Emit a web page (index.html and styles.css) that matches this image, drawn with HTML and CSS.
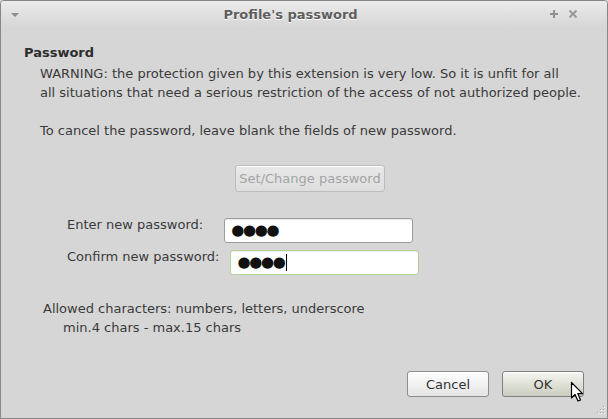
FILE: index.html
```html
<!DOCTYPE html>
<html>
<head>
<meta charset="utf-8">
<link rel="stylesheet" href="styles.css">
</head>
<body>
<div class="window">
  <div class="titlebar">
    <svg class="menu-btn" width="10" height="6" viewBox="0 0 10 6"><path d="M1 1 H9 L5 5 Z" fill="#8c8c8c"/></svg>
    <div class="title">Profile's password</div>
    <div class="tb-buttons">
      <svg width="10" height="10" viewBox="0 0 10 10"><path d="M5 1 V9 M1 5 H9" stroke="#8f8f8f" stroke-width="2"/></svg>
      <svg width="10" height="10" viewBox="0 0 10 10"><path d="M1.5 1.5 L8.5 8.5 M8.5 1.5 L1.5 8.5" stroke="#9a9a9a" stroke-width="2"/></svg>
    </div>
  </div>
  <div class="content">
    <div class="heading">Password</div>
    <div class="desc">
      <p>WARNING: the protection given by this extension is very low. So it is unfit for all<br>all situations that need a serious restriction of the access of not authorized people.</p>
      <p class="gap">To cancel the password, leave blank the fields of new password.</p>
    </div>
    <div class="set-row">
      <button class="btn disabled" disabled>Set/Change password</button>
    </div>
    <div class="fields">
      <div class="field-row">
        <span class="label">Enter new password:</span>
        <div class="entry entry-a"><span class="dots">●●●●</span></div>
      </div>
      <div class="field-row">
        <span class="label">Confirm new password:</span>
        <div class="entry entry-b focus"><span class="dots">●●●●</span><span class="caret"></span></div>
      </div>
    </div>
    <div class="allowed">
      <div>Allowed characters: numbers, letters, underscore</div>
      <div class="minmax">min.4 chars - max.15 chars</div>
    </div>
    <div class="actions">
      <button class="btn">Cancel</button>
      <button class="btn hover">OK</button>
    </div>
  </div>
  <svg class="pointer" width="16" height="22" viewBox="0 0 16 22"><path d="M1.5 1.5 V17 L5 13.5 L8 20 L10.5 19 L7.8 12.6 L12.5 12.6 Z" fill="#fff" stroke="#000" stroke-width="1.2" stroke-linejoin="round"/></svg>
  <svg class="grip" width="10" height="10" viewBox="0 0 10 10">
    <g fill="#a8a8a8">
      <rect x="8" y="0" width="1" height="1"/>
      <rect x="5" y="3" width="1" height="1"/><rect x="8" y="3" width="1" height="1"/>
      <rect x="2" y="6" width="1" height="1"/><rect x="5" y="6" width="1" height="1"/><rect x="8" y="6" width="1" height="1"/>
    </g>
    <g fill="#fff">
      <rect x="9" y="1" width="1" height="1"/>
      <rect x="6" y="4" width="1" height="1"/><rect x="9" y="4" width="1" height="1"/>
      <rect x="3" y="7" width="1" height="1"/><rect x="6" y="7" width="1" height="1"/><rect x="9" y="7" width="1" height="1"/>
    </g>
  </svg>
</div>
</body>
</html>
```
FILE: styles.css
```css
* { box-sizing: border-box; }
html, body { margin: 0; padding: 0; }
body {
  width: 608px;
  height: 419px;
  background: #d6d6d6;
  font-family: "DejaVu Sans", sans-serif;
  font-size: 13px;
  color: #3a3a3a;
  overflow: hidden;
}
.window {
  position: relative;
  width: 608px;
  height: 419px;
  border: 1px solid #868686;
  border-radius: 4px 4px 0 0;
  background: #d6d6d6;
  display: flex;
  flex-direction: column;
}
.titlebar {
  height: 26px;
  flex: none;
  display: flex;
  align-items: center;
  padding: 0 10px 0 8px;
  background: linear-gradient(#ebebeb, #d6d6d6);
  border-radius: 3px 3px 0 0;
}
.menu-btn { flex: none; margin-left: 1px; margin-top: 1px; }
.title {
  flex: 1;
  text-align: center;
  font-weight: bold;
  color: #5e5e5e;
  text-shadow: 0 1px 0 #fff;
  padding-left: 12px;
}
.tb-buttons { display: flex; gap: 9px; align-items: center; margin-right: 19px; }
.content {
  flex: 1;
  display: flex;
  flex-direction: column;
  padding: 16px 0 0 23px;
  line-height: 19px;
}
.heading { font-weight: bold; color: #2e2e2e; }
.desc { padding-left: 16px; margin-top: 2px; }
.desc p { margin: 0; }
.desc p.gap { margin-top: 19px; }
.set-row {
  display: flex;
  margin-top: 25px;
  padding-left: 211px;
}
.btn {
  font-family: "DejaVu Sans", sans-serif;
  font-size: 13px;
  color: #333;
  height: 26px;
  padding: 0 5px;
  white-space: nowrap;
  border: 1px solid #8e8e8e;
  border-radius: 3px;
  background: linear-gradient(#ffffff, #e4e4e4);
  box-shadow: inset 0 1px 0 #fff;
}
.btn.disabled {
  width: 150px;
  height: 27px;
  padding: 0;
  color: #a3a3a3;
  border-color: #bcbcbc;
  background: linear-gradient(#e8e8e8, #dedede);
}
.fields {
  display: flex;
  flex-direction: column;
  gap: 7px;
  margin-top: 26px;
  padding-left: 43px;
}
.field-row { display: flex; align-items: center; }
.label { margin-top: -13px; }
.entry {
  height: 25px;
  width: 189px;
  background: #fff;
  border: 1px solid #9c9c9c;
  border-radius: 3px;
  box-shadow: inset 0 1px 1px rgba(0,0,0,0.08);
  display: flex;
  align-items: center;
  padding-left: 6px;
}
.entry-a { margin-left: 21px; }
.entry-b { margin-left: 11px; }
.entry.focus { border-color: #b2d196; }
.dots {
  font-size: 15px;
  letter-spacing: -1.3px;
  color: #111;
  line-height: 1;
}
.caret {
  display: inline-block;
  width: 1px;
  height: 17px;
  background: #000;
  margin-left: 1px;
}
.allowed {
  margin-top: 24px;
  padding-left: 19px;
}
.minmax { padding-left: 20px; }
.actions {
  display: flex;
  justify-content: flex-end;
  gap: 13px;
  margin-top: auto;
  margin-bottom: 21px;
  padding-right: 23px;
}
.actions .btn { width: 82px; }
.btn.hover {
  background: linear-gradient(#f6f6f1, #c9cdbf);
  border-color: #7f7f7f;
}
.pointer { position: absolute; left: 569px; top: 380px; }
.grip { position: absolute; right: 2px; bottom: 2px; }
```
